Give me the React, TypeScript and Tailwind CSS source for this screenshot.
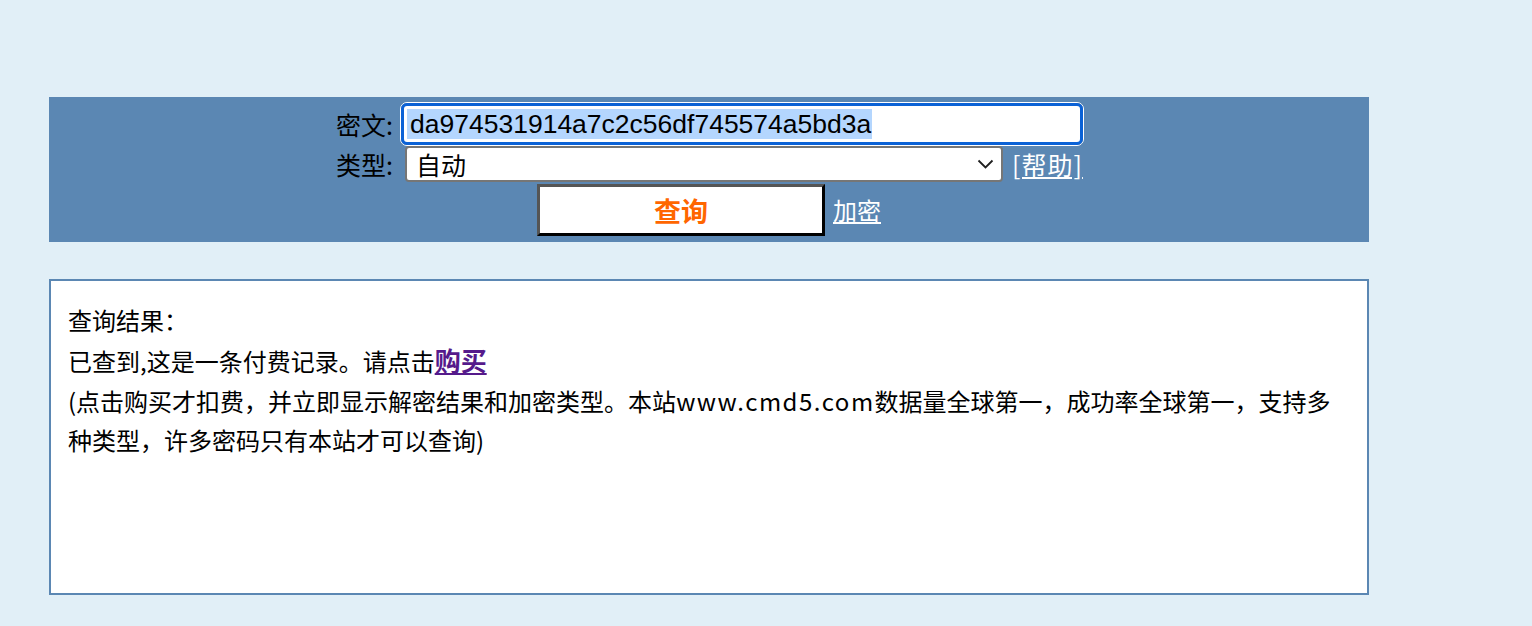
export default function App() {
  return (
    <div className="min-h-screen bg-[#e1eff7] pt-[97px] pl-[49px] font-['Noto_Sans_CJK_SC',sans-serif] text-black">
      {/* query panel */}
      <div className="w-[1320px] h-[145px] bg-[#5b87b3] pt-[5px]">
        <div className="w-[750px] mx-auto">
          <div className="flex items-center h-[44px]">
            <label className="w-[66px] pr-[7px] text-right text-[25px] leading-none">密文:</label>
            <div className="w-[684px] h-[44px] border border-white rounded-[7px]">
              <div className="h-full border-[3px] border-[#0b62d6] rounded-[6px] bg-white flex items-center">
                <span className="ml-[3px] pl-[3px] pr-[1px] h-[30px] leading-[30px] bg-[#b4d6fe] text-[26.5px] font-['Liberation_Sans',Arial,sans-serif]">
                  da974531914a7c2c56df745574a5bd3a
                </span>
              </div>
            </div>
          </div>
          <div className="flex items-center h-[36px]">
            <label className="w-[66px] pr-[7px] text-right text-[25px] leading-none">类型:</label>
            <div className="ml-[5px] w-[598px] h-[36px] border-2 border-[#767676] rounded-[4px] bg-white flex items-center justify-between pl-[9px] pr-[7px]">
              <span className="text-[25px] leading-none">自动</span>
              <svg width="17" height="10" viewBox="0 0 17 10" fill="none">
                <polyline points="1.5,1.5 8.5,8.5 15.5,1.5" stroke="#1f1f1f" strokeWidth="1.8" />
              </svg>
            </div>
            <a href="#" className="ml-[9px] text-white underline text-[25px] leading-none tracking-[1px]">
              [帮助]
            </a>
          </div>
        </div>
        <div className="flex items-center justify-center mt-[2px]">
          <button className="w-[288px] h-[52px] bg-white border-[3px] border-t-[#555555] border-l-[#555555] border-b-black border-r-black text-[#ff6600] font-bold text-[27px] leading-none">
            查询
          </button>
          <a href="#" className="ml-[8px] text-white underline text-[24px] leading-none">
            加密
          </a>
        </div>
      </div>

      {/* result box */}
      <div className="mt-[37px] w-[1320px] h-[316px] border-2 border-[#5b87b3] bg-white pl-[17px] pt-[19px] text-[24px]">
        <div className="leading-[40px]">查询结果：</div>
        <div className="leading-[40px] whitespace-nowrap">
          已查到,这是一条付费记录。请点击
          <a href="#" className="text-[#551a8b] font-bold underline text-[26px]">
            购买
          </a>
        </div>
        <div className="leading-[39px] whitespace-nowrap">
          (点击购买才扣费，并立即显示解密结果和加密类型。本站<span className="tracking-[1.5px]">www.cmd5.com</span>数据量全球第一，成功率全球第一，支持多
        </div>
        <div className="leading-[39px] whitespace-nowrap">种类型，许多密码只有本站才可以查询)</div>
      </div>
    </div>
  );
}
